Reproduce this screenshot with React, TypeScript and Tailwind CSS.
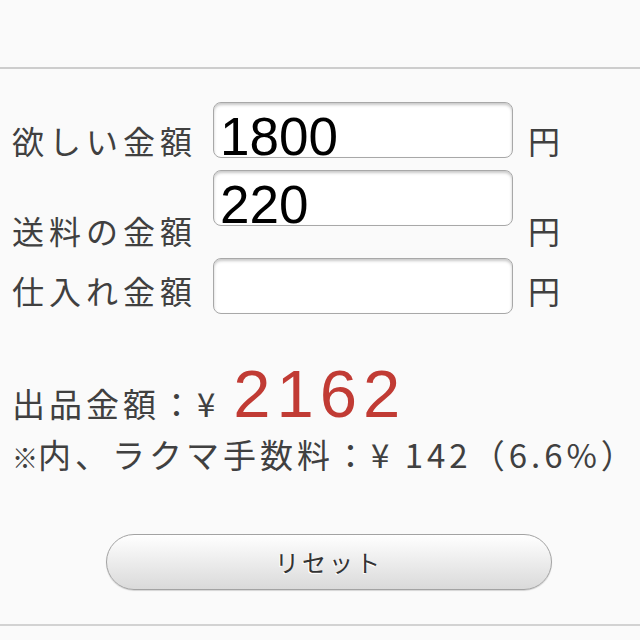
import React from "react";

const jp = "font-['Noto_Sans_CJK_JP',sans-serif]";

type PriceRowProps = {
  label: string;
  value?: string;
  rowClass: string;
  textClass: string;
};

function PriceRow(props: PriceRowProps) {
  const { label, value, rowClass, textClass } = props;
  return (
    <div className={`flex flex-row items-start ${rowClass}`}>
      <div className={`w-[201px] shrink-0 text-[32px] leading-none tracking-[5px] text-[#404040] whitespace-nowrap ${textClass}`}>
        {label}
      </div>
      <div className="w-[300px] h-[56px] shrink-0 rounded-[8px] border border-[#a8a8a8] bg-white shadow-[inset_0_2px_3px_rgba(0,0,0,0.22)] pl-[6px] pt-[14px] font-['Liberation_Sans',Arial,sans-serif] text-[53px] leading-[40px] text-black">
        {value}
      </div>
      <div className={`ml-[15px] text-[32px] leading-none text-[#404040] ${textClass}`}>円</div>
    </div>
  );
}

export default function App() {
  return (
    <div className={`w-[640px] h-[640px] overflow-hidden bg-[#fafafa] ${jp}`}>
      <div className="h-[67px]" />
      <div className="h-[2px] bg-[#cdcdcd]" />

      <div className="pl-[12px]">
        <PriceRow label="欲しい金額" value="1800" rowClass="mt-[33px]" textClass="mt-[22px]" />
        <PriceRow label="送料の金額" value="220" rowClass="mt-[12px]" textClass="mt-[44px]" />
        <PriceRow label="仕入れ金額" rowClass="mt-[12px]" textClass="mt-[16px]" />

        <div className="mt-[46px] flex flex-row items-baseline">
          <span className="text-[33px] leading-none tracking-[4px] text-[#404040]">出品金額：¥</span>
          <span className="ml-[14px] font-['Liberation_Sans',Arial,sans-serif] text-[67px] leading-none tracking-[6px] text-[#c13b34]">
            2162
          </span>
        </div>
        <div className="mt-[11px] text-[33px] leading-none tracking-[4px] text-[#404040] whitespace-nowrap">
          <span className="text-[26px] font-bold tracking-normal">※</span>内、ラクマ手数料：¥ 142（6.6%）
        </div>
      </div>

      <button
        type="button"
        className="mt-[63px] ml-[106px] flex h-[56px] w-[446px] items-center justify-center rounded-full border border-[#a3a3a3] bg-gradient-to-b from-white to-[#dadada] text-[24px] tracking-[3px] text-[#333] shadow-[0_1px_1px_rgba(0,0,0,0.15)] [text-shadow:-1px_1px_0_#fff]"
      >
        リセット
      </button>

      <div className="mt-[34px] h-[2px] bg-[#d2d2d2]" />
    </div>
  );
}
